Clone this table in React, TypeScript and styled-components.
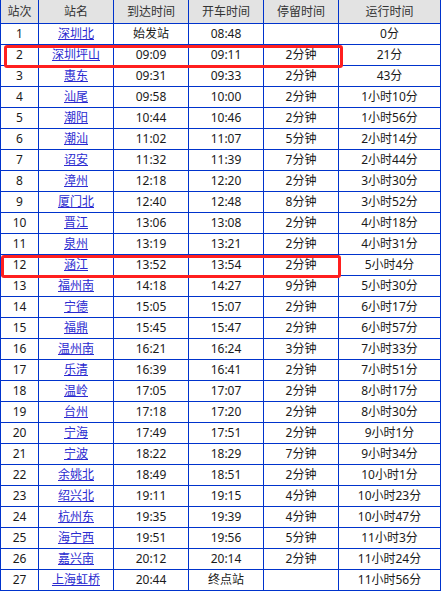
import React, { FC } from 'react';
import styled, { createGlobalStyle } from 'styled-components';

type Stop = {
  no: number;
  name: string;
  arrive: string;
  depart: string;
  stay: string;
  elapsed: string;
};

const stops: Stop[] = [
  { no: 1, name: '深圳北', arrive: '始发站', depart: '08:48', stay: '', elapsed: '0分' },
  { no: 2, name: '深圳坪山', arrive: '09:09', depart: '09:11', stay: '2分钟', elapsed: '21分' },
  { no: 3, name: '惠东', arrive: '09:31', depart: '09:33', stay: '2分钟', elapsed: '43分' },
  { no: 4, name: '汕尾', arrive: '09:58', depart: '10:00', stay: '2分钟', elapsed: '1小时10分' },
  { no: 5, name: '潮阳', arrive: '10:44', depart: '10:46', stay: '2分钟', elapsed: '1小时56分' },
  { no: 6, name: '潮汕', arrive: '11:02', depart: '11:07', stay: '5分钟', elapsed: '2小时14分' },
  { no: 7, name: '诏安', arrive: '11:32', depart: '11:39', stay: '7分钟', elapsed: '2小时44分' },
  { no: 8, name: '漳州', arrive: '12:18', depart: '12:20', stay: '2分钟', elapsed: '3小时30分' },
  { no: 9, name: '厦门北', arrive: '12:40', depart: '12:48', stay: '8分钟', elapsed: '3小时52分' },
  { no: 10, name: '晋江', arrive: '13:06', depart: '13:08', stay: '2分钟', elapsed: '4小时18分' },
  { no: 11, name: '泉州', arrive: '13:19', depart: '13:21', stay: '2分钟', elapsed: '4小时31分' },
  { no: 12, name: '涵江', arrive: '13:52', depart: '13:54', stay: '2分钟', elapsed: '5小时4分' },
  { no: 13, name: '福州南', arrive: '14:18', depart: '14:27', stay: '9分钟', elapsed: '5小时30分' },
  { no: 14, name: '宁德', arrive: '15:05', depart: '15:07', stay: '2分钟', elapsed: '6小时17分' },
  { no: 15, name: '福鼎', arrive: '15:45', depart: '15:47', stay: '2分钟', elapsed: '6小时57分' },
  { no: 16, name: '温州南', arrive: '16:21', depart: '16:24', stay: '3分钟', elapsed: '7小时33分' },
  { no: 17, name: '乐清', arrive: '16:39', depart: '16:41', stay: '2分钟', elapsed: '7小时51分' },
  { no: 18, name: '温岭', arrive: '17:05', depart: '17:07', stay: '2分钟', elapsed: '8小时17分' },
  { no: 19, name: '台州', arrive: '17:18', depart: '17:20', stay: '2分钟', elapsed: '8小时30分' },
  { no: 20, name: '宁海', arrive: '17:49', depart: '17:51', stay: '2分钟', elapsed: '9小时1分' },
  { no: 21, name: '宁波', arrive: '18:22', depart: '18:29', stay: '7分钟', elapsed: '9小时34分' },
  { no: 22, name: '余姚北', arrive: '18:49', depart: '18:51', stay: '2分钟', elapsed: '10小时1分' },
  { no: 23, name: '绍兴北', arrive: '19:11', depart: '19:15', stay: '4分钟', elapsed: '10小时23分' },
  { no: 24, name: '杭州东', arrive: '19:35', depart: '19:39', stay: '4分钟', elapsed: '10小时47分' },
  { no: 25, name: '海宁西', arrive: '19:51', depart: '19:56', stay: '5分钟', elapsed: '11小时3分' },
  { no: 26, name: '嘉兴南', arrive: '20:12', depart: '20:14', stay: '2分钟', elapsed: '11小时24分' },
  { no: 27, name: '上海虹桥', arrive: '20:44', depart: '终点站', stay: '', elapsed: '11小时56分' },
];

const columns = [
  { title: '站次', width: 38 },
  { title: '站名', width: 75 },
  { title: '到达时间', width: 75 },
  { title: '开车时间', width: 75 },
  { title: '停留时间', width: 75 },
  { title: '运行时间', width: 102 },
];

// rows that are circled in red
const marked = [
  { row: 2, left: 4, width: 339 },
  { row: 12, left: 1, width: 340 },
];

const HEADER_H = 24;
const ROW_H = 21;

const App: FC = () => {
  return (
    <>
      <GlobalStyle />
      <Wrapper>
        <Table>
          <colgroup>
            {columns.map(c => (
              <col key={c.title} style={{ width: c.width }} />
            ))}
          </colgroup>
          <thead>
            <tr>
              {columns.map(c => (
                <Th key={c.title}>{c.title}</Th>
              ))}
            </tr>
          </thead>
          <tbody>
            {stops.map(s => (
              <tr key={s.no}>
                <Td>{s.no}</Td>
                <Td>
                  <StationLink href="#">{s.name}</StationLink>
                </Td>
                <Td>{s.arrive}</Td>
                <Td>{s.depart}</Td>
                <Td>{s.stay}</Td>
                <Td>{s.elapsed}</Td>
              </tr>
            ))}
          </tbody>
        </Table>
        {marked.map(m => (
          <Marker
            key={m.row}
            style={{
              top: HEADER_H + (m.row - 1) * ROW_H,
              left: m.left,
              width: m.width,
            }}
          />
        ))}
      </Wrapper>
    </>
  );
};

export default App;

const GlobalStyle = createGlobalStyle`
  body {
    margin: 0;
    background: #ffffff;
    font-family: "Noto Sans", "Noto Sans CJK SC", sans-serif;
  }
`;

const Wrapper = styled.div`
  position: relative;
  width: 441px;
`;

const Table = styled.table`
  border-collapse: collapse;
  table-layout: fixed;
  width: 440px;
  font-size: 12px;
  color: #1a1a1a;
`;

const Th = styled.th`
  height: 23px;
  padding: 0;
  background: #e3e3e3;
  border: 1px solid #0033cc;
  border-top: none;
  font-weight: normal;
  color: #333333;
  text-align: center;
  line-height: 23px;
`;

const Td = styled.td`
  height: 20px;
  padding: 0;
  border: 1px solid #0033cc;
  text-align: center;
  line-height: 20px;
  white-space: nowrap;
`;

const StationLink = styled.a`
  color: #2a2ad0;
  text-decoration: underline;
`;

const Marker = styled.div`
  position: absolute;
  height: 23px;
  box-sizing: border-box;
  border: 3px solid #ff1f1f;
  border-radius: 3px;
  pointer-events: none;
`;
